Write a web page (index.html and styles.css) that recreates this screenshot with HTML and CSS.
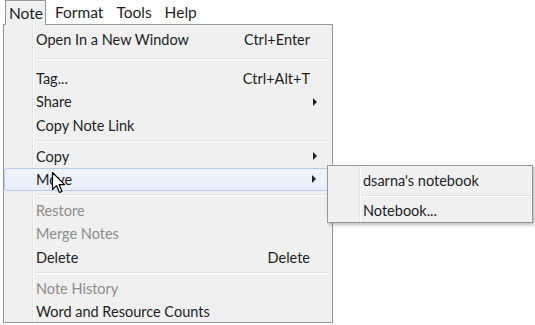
FILE: index.html
```html
<!DOCTYPE html>
<html lang="en">
<head>
    <meta charset="UTF-8">
    <title>Note menu</title>
    <link rel="stylesheet" href="styles.css">
</head>
<body>
    <div class="menubar">
        <span class="top active">Note</span>
        <span class="top">Format</span>
        <span class="top">Tools</span>
        <span class="top">Help</span>
    </div>

    <div class="menu">
        <div class="item first"><span class="label">Open In a New Window</span><span class="key">Ctrl+Enter</span></div>
        <div class="sep wide"></div>
        <div class="item"><span class="label">Tag...</span><span class="key">Ctrl+Alt+T</span></div>
        <div class="item sub"><span class="label">Share</span></div>
        <div class="item"><span class="label">Copy Note Link</span></div>
        <div class="sep"></div>
        <div class="item sub"><span class="label">Copy</span></div>
        <div class="item sub hover"><span class="label">Move</span></div>
        <div class="sep"></div>
        <div class="item off"><span class="label">Restore</span></div>
        <div class="item off"><span class="label">Merge Notes</span></div>
        <div class="item"><span class="label">Delete</span><span class="key">Delete</span></div>
        <div class="sep"></div>
        <div class="item off"><span class="label">Note History</span></div>
        <div class="item"><span class="label">Word and Resource Counts</span></div>
    </div>

    <div class="submenu">
        <div class="item"><span class="label">dsarna's notebook</span></div>
        <div class="sep"></div>
        <div class="item"><span class="label">Notebook...</span></div>
    </div>

    <svg class="cursor" width="16" height="24" viewBox="0 0 16 24">
        <path d="M1.5 1.5 L1.5 18.5 L5.5 14.6 L8.4 21.5 L11 20.4 L8.1 13.6 L13.6 13.6 Z" fill="#fff" stroke="#000" stroke-width="1.2" stroke-linejoin="round"/>
    </svg>
</body>
</html>
```

FILE: styles.css
```css
body {
    margin: 0;
    background: #fff;
    font-family: Lato, "Open Sans", sans-serif;
    font-size: 14.5px;
    color: #1e1e1e;
    width: 535px;
    height: 325px;
    overflow: hidden;
    position: relative;
}
.menubar {
    display: flex;
    height: 24px;
    padding-left: 4px;
    font-size: 15.5px;
}
.top {
    display: flex;
    align-items: center;
    padding: 0 7px 0 6px;
    height: 24px;
    box-sizing: border-box;
}
.top.active {
    background: #f0f0f0;
    border: 1px solid #979797;
    border-bottom: none;
    padding: 0 2px 0 3px;
    height: 25px;
    margin-left: 1px;
    margin-right: 3px;
    position: relative;
    z-index: 2;
}
.menu {
    margin-left: 3px;
    width: 330px;
    box-sizing: border-box;
    height: 299px;
    border: 1px solid #979797;
    background:
        linear-gradient(to right, transparent 28px, #e2e3e3 28px, #e2e3e3 29px, #fff 29px, #fff 30px, transparent 30px),
        #f0f0f0;
    padding: 3.3px 3px 0 0;
    position: relative;
    z-index: 1;
}
.item {
    display: flex;
    align-items: center;
    height: 23.4px;
    box-sizing: border-box;
    padding: 0 19px 0 32px;
    position: relative;
}
.label { flex: 1; }
.key { text-align: right; }
.off { color: #8d8d8d; }
.sub::after {
    content: "";
    position: absolute;
    right: 12px;
    top: 50%;
    margin-top: -4px;
    border-left: 4px solid #222;
    border-top: 4px solid transparent;
    border-bottom: 4px solid transparent;
}
.hover {
    border: 1px solid #b4cdee;
    border-radius: 3px;
    background: linear-gradient(#f1f5fb, #e6eefa);
    padding-left: 31px;
}
.sep {
    height: 7.5px;
    display: flex;
    flex-direction: column;
    justify-content: center;
    padding-left: 31px;
}
.sep::before {
    content: "";
    display: block;
    height: 1px;
    background: #e0e0e0;
    border-bottom: 1px solid #fff;
}
.sep.wide { height: 15px; }
.submenu {
    position: absolute;
    left: 327px;
    top: 165px;
    width: 206px;
    height: 58px;
    box-sizing: border-box;
    border: 1px solid #979797;
    background:
        linear-gradient(to right, transparent 31px, #e2e3e3 31px, #e2e3e3 32px, #fff 32px, #fff 33px, transparent 33px),
        #f0f0f0;
    box-shadow: 2px 2px 3px rgba(0, 0, 0, 0.25);
    padding-top: 3px;
    z-index: 3;
}
.submenu .item {
    padding-left: 35px;
    height: 23px;
}
.submenu .sep {
    height: 7px;
    padding-left: 33px;
}
.cursor {
    position: absolute;
    left: 51px;
    top: 171px;
    z-index: 4;
}
```
